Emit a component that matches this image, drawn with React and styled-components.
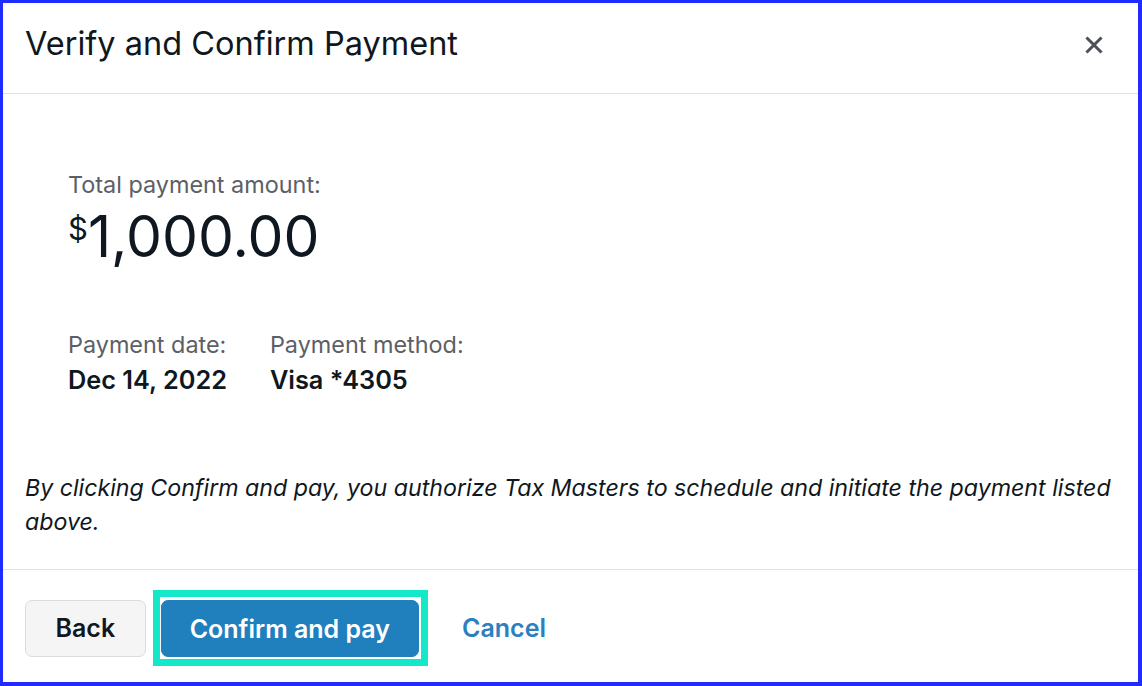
import styled, { createGlobalStyle } from 'styled-components';

const GlobalStyle = createGlobalStyle`
  html, body {
    margin: 0;
    padding: 0;
    background: #ffffff;
  }
  body {
    font-family: Inter, "Noto Sans", sans-serif;
    color: #0f1720;
  }
`;

const Frame = styled.div`
  box-sizing: border-box;
  width: 1142px;
  height: 686px;
  border-style: solid;
  border-color: #1f2bff;
  border-width: 3px 4px 4px 3px;
  display: flex;
  flex-direction: column;
  background: #ffffff;
`;

const Header = styled.header`
  display: flex;
  align-items: flex-start;
  justify-content: space-between;
  height: 91px;
  box-sizing: border-box;
  padding: 22px 34px 0 22px;
  border-bottom: 1px solid #e2e2e2;
`;

const Title = styled.h1`
  margin: 0;
  font-size: 32.5px;
  line-height: 38px;
  font-weight: 400;
  color: #0f1720;
`;

const CloseButton = styled.button`
  border: none;
  background: none;
  padding: 0;
  margin-top: 10px;
  width: 20px;
  height: 20px;
  display: flex;
  align-items: center;
  justify-content: center;
  cursor: pointer;
`;

const Body = styled.main`
  flex: 1;
  display: flex;
  flex-direction: column;
  padding: 0 22px;
  border-bottom: 1px solid #e2e2e2;
`;

const Summary = styled.section`
  padding: 77px 0 0 43px;
  display: flex;
  flex-direction: column;
`;

const Label = styled.div`
  font-size: 23.4px;
  line-height: 28px;
  color: #5c6066;
`;

const Amount = styled.div`
  display: flex;
  align-items: flex-start;
  font-size: 57px;
  line-height: 64px;
  color: #0f1720;
  margin-top: 6px;
`;

const Currency = styled.span`
  font-size: 31px;
  line-height: 28px;
  margin-top: 10px;
`;

const Details = styled.div`
  display: flex;
  gap: 43px;
  margin-top: 62px;
`;

const Detail = styled.div`
  display: flex;
  flex-direction: column;
  gap: 7px;
`;

const Value = styled.div`
  font-size: 25.3px;
  line-height: 28px;
  font-weight: 600;
  color: #0f1720;
`;

const Disclaimer = styled.p`
  margin: 77px 0 0;
  font-size: 23.2px;
  line-height: 34px;
  font-style: italic;
  color: #0f1720;
`;

const Footer = styled.footer`
  display: flex;
  align-items: center;
  gap: 7px;
  height: 112px;
  box-sizing: border-box;
  padding: 4px 22px 0;
`;

const Button = styled.button`
  font-family: Inter, "Noto Sans", sans-serif;
  font-size: 25px;
  font-weight: 600;
  height: 57px;
  padding: 0 ${(p) => (p.$primary ? '28px' : '29.5px')};
  border-radius: 7px;
  cursor: pointer;
  border: 1px solid ${(p) => (p.$primary ? '#2080bd' : '#dcdcdc')};
  background: ${(p) => (p.$primary ? '#2080bd' : '#f5f5f5')};
  color: ${(p) => (p.$primary ? '#ffffff' : '#0f1720')};
`;

const FocusRing = styled.div`
  padding: 3px 2px 2px 1px;
  border: 7px solid #14e8c8;
  display: flex;
  margin-right: 7px;
`;

const LinkButton = styled.button`
  font-family: Inter, "Noto Sans", sans-serif;
  font-size: 25px;
  font-weight: 600;
  border: none;
  background: none;
  color: #2a80c0;
  padding: 0 20px;
  cursor: pointer;
`;

export default function App() {
  return (
    <>
      <GlobalStyle />
      <Frame>
        <Header>
          <Title>Verify and Confirm Payment</Title>
          <CloseButton aria-label="Close">
            <svg width="18" height="18" viewBox="0 0 18 18">
              <path d="M2.5 2.5 L15.5 15.5 M15.5 2.5 L2.5 15.5" stroke="#4d5157" strokeWidth="3" strokeLinecap="square" />
            </svg>
          </CloseButton>
        </Header>
        <Body>
          <Summary>
            <Label>Total payment amount:</Label>
            <Amount>
              <Currency>$</Currency>
              1,000.00
            </Amount>
            <Details>
              <Detail>
                <Label>Payment date:</Label>
                <Value>Dec 14, 2022</Value>
              </Detail>
              <Detail>
                <Label>Payment method:</Label>
                <Value>Visa *4305</Value>
              </Detail>
            </Details>
          </Summary>
          <Disclaimer>
            By clicking Confirm and pay, you authorize Tax Masters to schedule and initiate the payment listed above.
          </Disclaimer>
        </Body>
        <Footer>
          <Button>Back</Button>
          <FocusRing>
            <Button $primary>Confirm and pay</Button>
          </FocusRing>
          <LinkButton>Cancel</LinkButton>
        </Footer>
      </Frame>
    </>
  );
}
